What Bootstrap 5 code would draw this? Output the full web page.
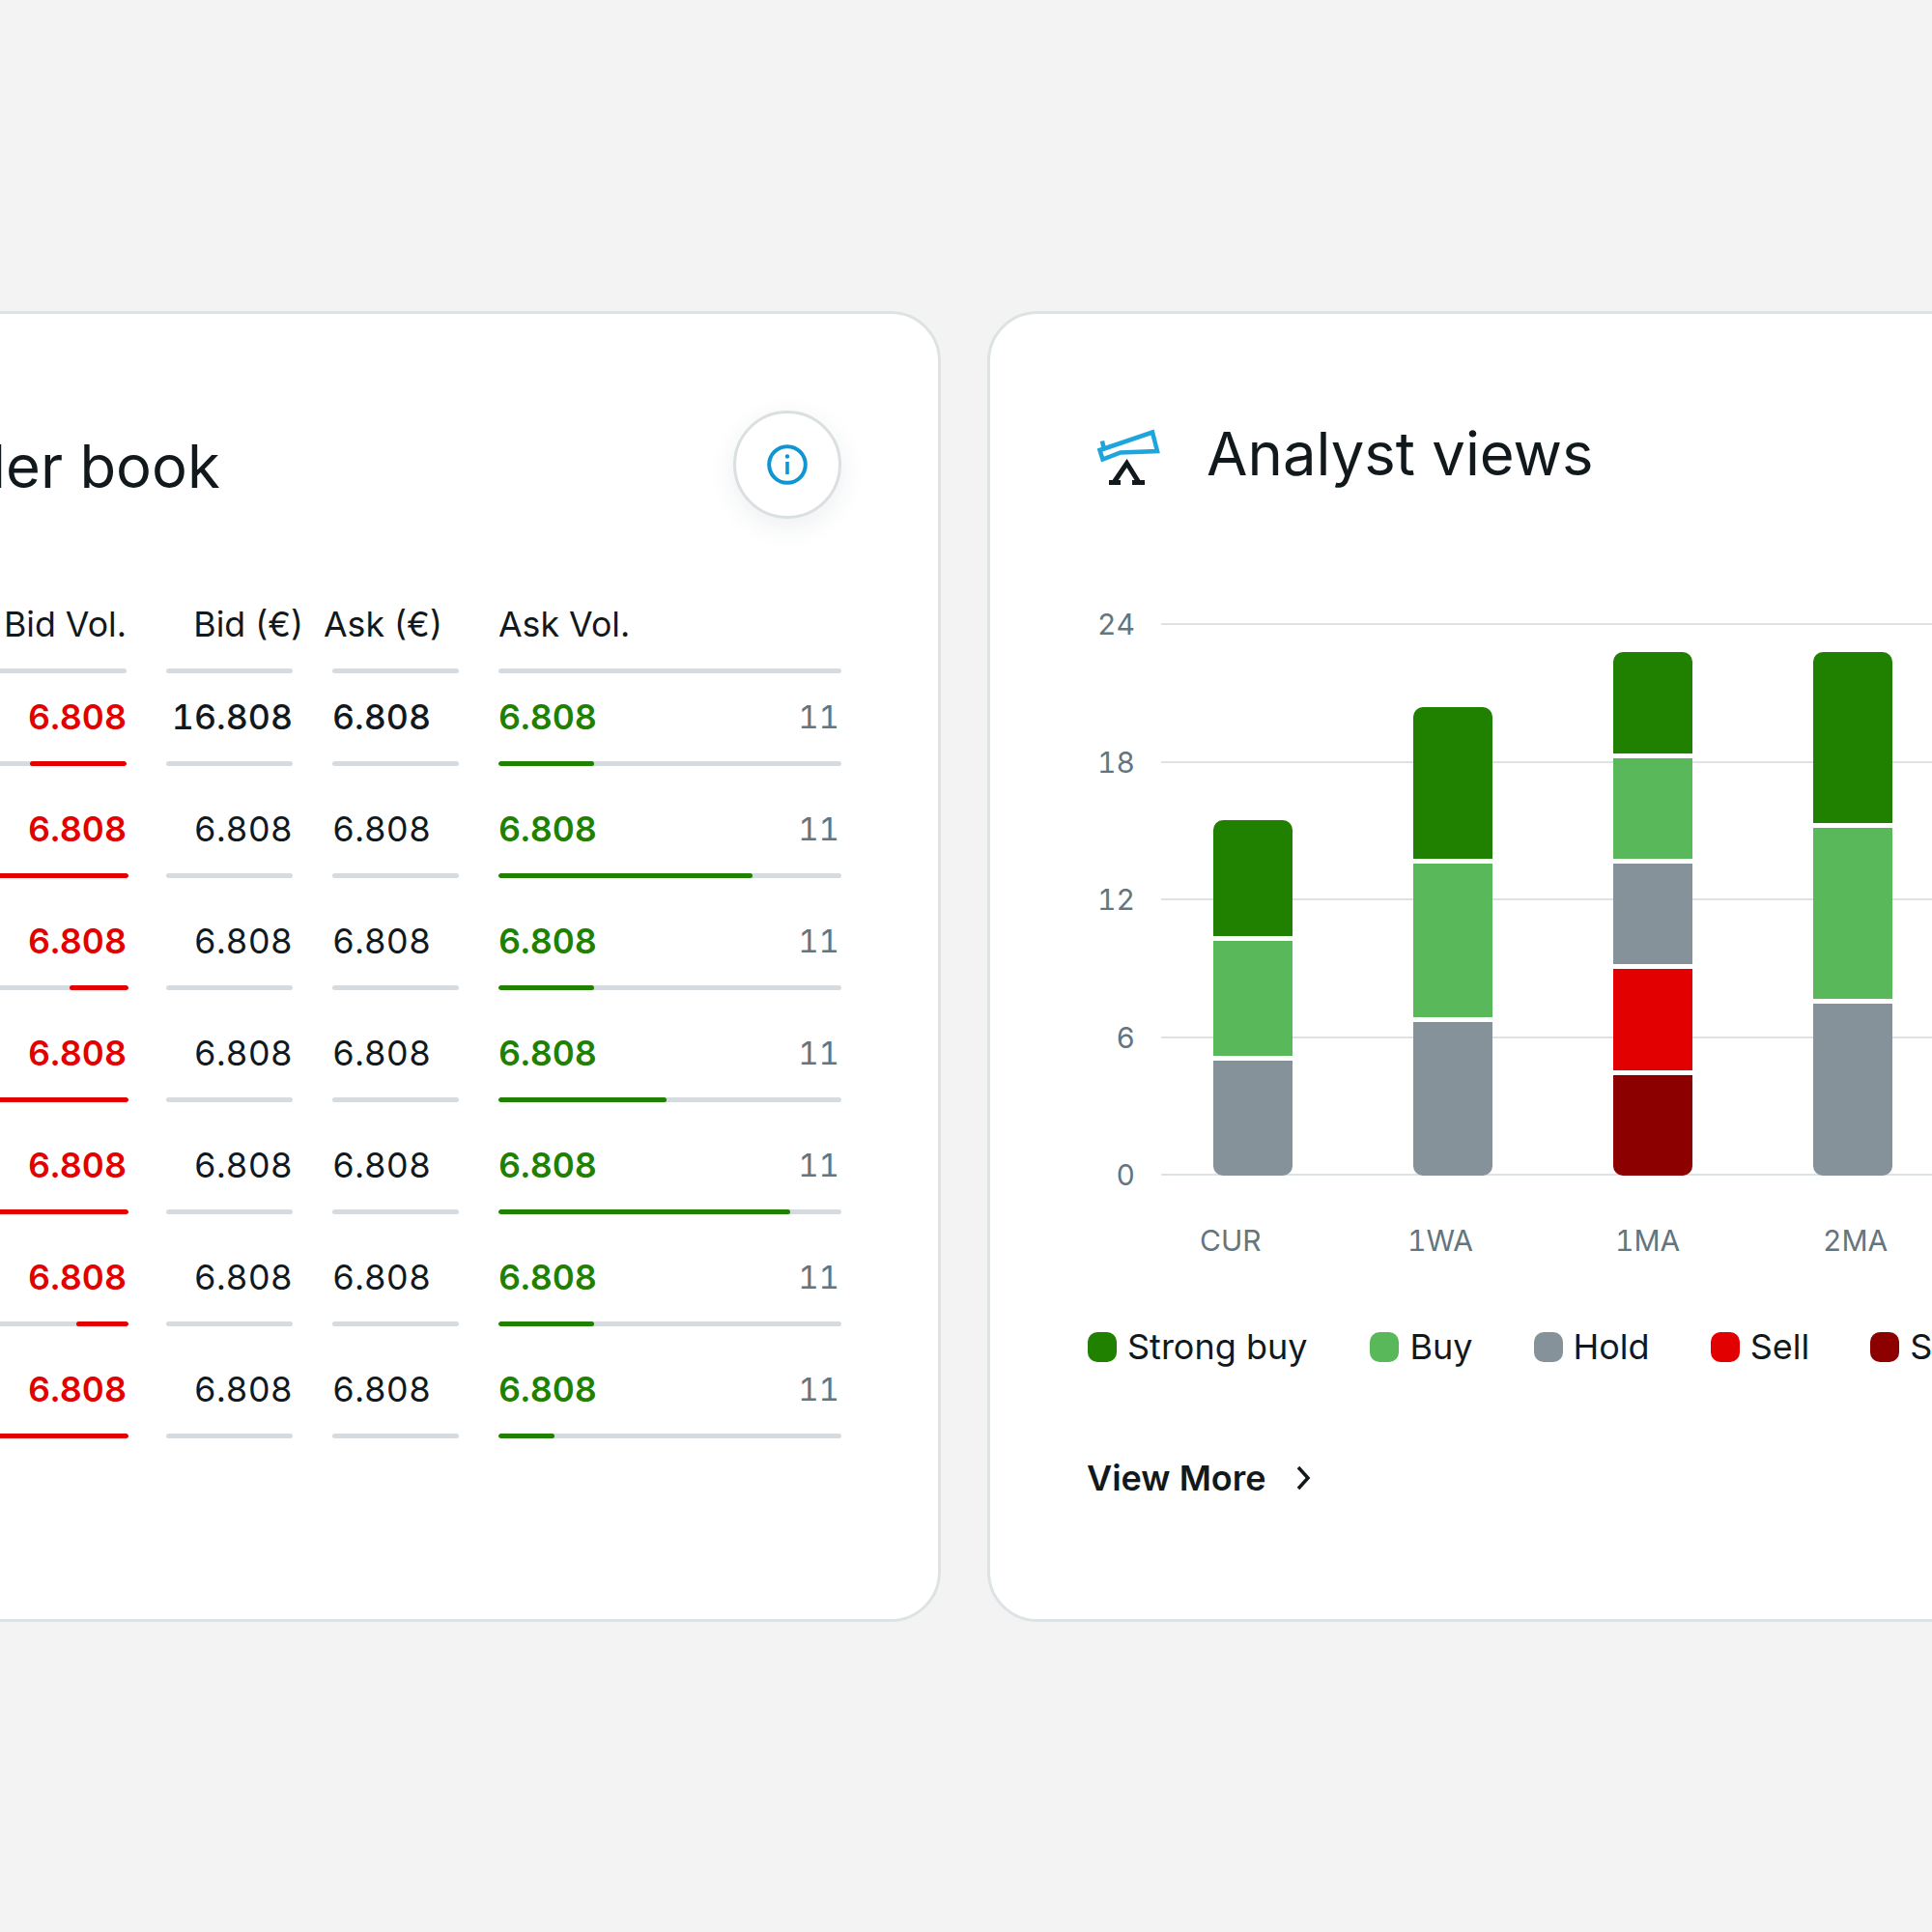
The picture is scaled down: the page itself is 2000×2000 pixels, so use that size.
<!DOCTYPE html>
<html lang="en">
<head>
    <meta charset="UTF-8">
    <meta name="viewport" content="width=device-width, initial-scale=1.0">
    <title>Order book and analyst views</title>
    <link rel="stylesheet" href="https://cdn.jsdelivr.net/npm/bootstrap@5.3.0/dist/css/bootstrap.min.css">
    <style>
        body {
            background-color: #f3f3f3;
            color: #12191d;
            font-family: "Inter", "Liberation Sans", sans-serif;
            overflow: hidden;
        }

        .page-wrap {
            margin-left: -328px;
            padding-top: 322px;
            gap: 48px;
        }

        .panel {
            flex: 0 0 1302px;
            height: 1357px;
            padding: 100px 100px;
            border: 3px solid #dde2e4;
            border-radius: 52px;
            background: #fff;
        }

        .panel-title {
            font-size: 61.6px;
            font-weight: 400;
            line-height: 72px;
            margin: 0;
        }

        .info-btn {
            width: 112px;
            height: 112px;
            border: 3px solid #dae0e2;
            border-radius: 50%;
            background: #fff;
            box-shadow: 0 8px 28px rgba(30, 50, 60, .08);
        }

        /* order book */
        .book-head { height: 112px; }
        .book-title { margin-left: 124px; margin-top: 3px; }

        .book-grid {
            display: grid;
            grid-template-columns: 356px 131px 131px 355px;
            column-gap: 41px;
            font-size: 35.7px;
            line-height: 44px;
        }

        .book-grid.head-row { margin-top: 87px; margin-bottom: 23px; }
        .book-grid.data-row { margin-bottom: 43px; font-variant-numeric: tabular-nums; }

        .cell-text { margin-bottom: 24px; white-space: nowrap; }
        .shift-right { margin-right: -11px; }
        .shift-left { margin-left: -9px; }
        .count-text { color: #64757e; font-size: 33px; padding-right: 2px; }
        .bid-text { color: #e30000; }
        .ask-text { color: #208000; }

        .level-bar {
            --bs-progress-height: 5px;
            --bs-progress-bg: #d6dbdf;
            --bs-progress-border-radius: 3px;
        }

        .level-bar.bid-wide { margin-right: -2px; }
        .level-bar .progress-bar { border-radius: 3px; }
        .fill-bid { background-color: #e30000; }
        .fill-ask { background-color: #208000; }

        /* analyst chart */
        .views-head { height: 90px; }
        .views-icon { margin-left: 8px; margin-right: 46px; margin-top: 8px; }

        .chart-area {
            position: relative;
            height: 572px;
            margin-top: 130px;
        }

        .axis-row { height: 2px; }

        .axis-label {
            width: 50px;
            margin-right: 27px;
            color: #64757e;
            font-size: 30px;
            font-variant-numeric: tabular-nums;
            line-height: 2px;
            text-align: right;
        }

        .axis-line { height: 2px; background: #dde2e4; }

        .bar-layer {
            position: absolute;
            left: 131px;
            bottom: 0;
            gap: 125px;
        }

        .stack-bar {
            width: 82px;
            border-radius: 10px;
            overflow: hidden;
        }

        .stack-bar > div + div { border-top: 5px solid #fff; }

        .c-strong { background-color: #208000; }
        .c-buy { background-color: #59b85a; }
        .c-hold { background-color: #869299; }
        .c-sell { background-color: #e30000; }
        .c-strong-sell { background-color: #8c0000; }

        .tick-row {
            margin-top: 47px;
            margin-left: 117px;
            color: #64757e;
            font-size: 30px;
            font-variant-numeric: tabular-nums;
            line-height: 40px;
        }

        .tick-cell { width: 215px; }

        .legend-row {
            margin-top: 68px;
            margin-left: 1px;
            font-size: 36px;
            line-height: 44px;
            white-space: nowrap;
            gap: 63px;
        }

        .legend-first { margin-right: 2px; }

        .legend-box {
            width: 30px;
            height: 31px;
            margin-right: 11px;
            border-radius: 10px;
        }

        .more-link {
            margin-top: 92px;
            color: #12191d;
            font-size: 36px;
            font-weight: 600;
            line-height: 44px;
            text-decoration: none;
            gap: 30px;
        }
    </style>
</head>
<body>

    <div class="page-wrap d-flex">

        <!-- Order book -->
        <div class="panel">
            <div class="book-head d-flex align-items-center justify-content-between">
                <h2 class="panel-title book-title">Order book</h2>
                <div class="info-btn d-flex align-items-center justify-content-center">
                    <svg width="42" height="42" viewBox="0 0 42 42" fill="none" stroke="#0f96d2" stroke-width="4">
                        <circle cx="21" cy="21" r="18.8"/>
                        <path d="M21 18v13" stroke-width="3.6"/>
                        <circle cx="21" cy="12.5" r="2.2" fill="#0f96d2" stroke="none"/>
                    </svg>
                </div>
            </div>

            <div class="book-grid head-row">
                <div><div class="cell-text text-end">Bid Vol.</div><div class="progress level-bar"></div></div>
                <div><div class="cell-text text-end shift-right">Bid (€)</div><div class="progress level-bar"></div></div>
                <div><div class="cell-text shift-left">Ask (€)</div><div class="progress level-bar"></div></div>
                <div><div class="cell-text">Ask Vol.</div><div class="progress level-bar"></div></div>
            </div>

            <div class="book-grid data-row">
                <div><div class="cell-text text-end bid-text fw-semibold">6.808</div><div class="progress level-bar justify-content-end"><div class="progress-bar fill-bid" style="width: 28%"></div></div></div>
                <div><div class="cell-text text-end fw-medium">16.808</div><div class="progress level-bar"></div></div>
                <div><div class="cell-text fw-medium">6.808</div><div class="progress level-bar"></div></div>
                <div><div class="cell-text d-flex justify-content-between"><span class="ask-text fw-semibold">6.808</span><span class="count-text">11</span></div><div class="progress level-bar"><div class="progress-bar fill-ask" style="width: 28%"></div></div></div>
            </div>
            <div class="book-grid data-row">
                <div><div class="cell-text text-end bid-text fw-semibold">6.808</div><div class="progress level-bar bid-wide justify-content-end"><div class="progress-bar fill-bid" style="width: 74%"></div></div></div>
                <div><div class="cell-text text-end">6.808</div><div class="progress level-bar"></div></div>
                <div><div class="cell-text">6.808</div><div class="progress level-bar"></div></div>
                <div><div class="cell-text d-flex justify-content-between"><span class="ask-text fw-semibold">6.808</span><span class="count-text">11</span></div><div class="progress level-bar"><div class="progress-bar fill-ask" style="width: 74%"></div></div></div>
            </div>
            <div class="book-grid data-row">
                <div><div class="cell-text text-end bid-text fw-semibold">6.808</div><div class="progress level-bar bid-wide justify-content-end"><div class="progress-bar fill-bid" style="width: 17%"></div></div></div>
                <div><div class="cell-text text-end">6.808</div><div class="progress level-bar"></div></div>
                <div><div class="cell-text">6.808</div><div class="progress level-bar"></div></div>
                <div><div class="cell-text d-flex justify-content-between"><span class="ask-text fw-semibold">6.808</span><span class="count-text">11</span></div><div class="progress level-bar"><div class="progress-bar fill-ask" style="width: 28%"></div></div></div>
            </div>
            <div class="book-grid data-row">
                <div><div class="cell-text text-end bid-text fw-semibold">6.808</div><div class="progress level-bar bid-wide justify-content-end"><div class="progress-bar fill-bid" style="width: 60%"></div></div></div>
                <div><div class="cell-text text-end">6.808</div><div class="progress level-bar"></div></div>
                <div><div class="cell-text">6.808</div><div class="progress level-bar"></div></div>
                <div><div class="cell-text d-flex justify-content-between"><span class="ask-text fw-semibold">6.808</span><span class="count-text">11</span></div><div class="progress level-bar"><div class="progress-bar fill-ask" style="width: 49%"></div></div></div>
            </div>
            <div class="book-grid data-row">
                <div><div class="cell-text text-end bid-text fw-semibold">6.808</div><div class="progress level-bar bid-wide justify-content-end"><div class="progress-bar fill-bid" style="width: 85%"></div></div></div>
                <div><div class="cell-text text-end">6.808</div><div class="progress level-bar"></div></div>
                <div><div class="cell-text">6.808</div><div class="progress level-bar"></div></div>
                <div><div class="cell-text d-flex justify-content-between"><span class="ask-text fw-semibold">6.808</span><span class="count-text">11</span></div><div class="progress level-bar"><div class="progress-bar fill-ask" style="width: 85%"></div></div></div>
            </div>
            <div class="book-grid data-row">
                <div><div class="cell-text text-end bid-text fw-semibold">6.808</div><div class="progress level-bar bid-wide justify-content-end"><div class="progress-bar fill-bid" style="width: 15%"></div></div></div>
                <div><div class="cell-text text-end">6.808</div><div class="progress level-bar"></div></div>
                <div><div class="cell-text">6.808</div><div class="progress level-bar"></div></div>
                <div><div class="cell-text d-flex justify-content-between"><span class="ask-text fw-semibold">6.808</span><span class="count-text">11</span></div><div class="progress level-bar"><div class="progress-bar fill-ask" style="width: 28%"></div></div></div>
            </div>
            <div class="book-grid data-row">
                <div><div class="cell-text text-end bid-text fw-semibold">6.808</div><div class="progress level-bar bid-wide justify-content-end"><div class="progress-bar fill-bid" style="width: 70%"></div></div></div>
                <div><div class="cell-text text-end">6.808</div><div class="progress level-bar"></div></div>
                <div><div class="cell-text">6.808</div><div class="progress level-bar"></div></div>
                <div><div class="cell-text d-flex justify-content-between"><span class="ask-text fw-semibold">6.808</span><span class="count-text">11</span></div><div class="progress level-bar"><div class="progress-bar fill-ask" style="width: 16.3%"></div></div></div>
            </div>
        </div>

        <!-- Analyst views -->
        <div class="panel">
            <div class="views-head d-flex align-items-center">
                <svg class="views-icon" width="70" height="64" viewBox="23 22 70 64" fill="none">
                    <path d="M31 36.500l1.500 7M28.500 46L83 27.500l5 19.500-38 1.500-18.500 7z" stroke="#1ea5dc" stroke-width="4.500"/>
                    <path d="M43 79.500L56.500 59.500 69 79.500" stroke="#12191d" stroke-width="5"/>
                    <path d="M38 79.500h12M62 79.500h13" stroke="#12191d" stroke-width="5"/>
                </svg>
                <h2 class="panel-title">Analyst views</h2>
            </div>

            <div class="chart-area d-flex flex-column justify-content-between">
                <div class="axis-row d-flex align-items-center"><span class="axis-label">24</span><div class="axis-line flex-grow-1"></div></div>
                <div class="axis-row d-flex align-items-center"><span class="axis-label">18</span><div class="axis-line flex-grow-1"></div></div>
                <div class="axis-row d-flex align-items-center"><span class="axis-label">12</span><div class="axis-line flex-grow-1"></div></div>
                <div class="axis-row d-flex align-items-center"><span class="axis-label">6</span><div class="axis-line flex-grow-1"></div></div>
                <div class="axis-row d-flex align-items-center"><span class="axis-label">0</span><div class="axis-line flex-grow-1"></div></div>

                <div class="bar-layer d-flex align-items-end">
                    <div class="stack-bar">
                        <div class="c-strong" style="height: 120px"></div>
                        <div class="c-buy" style="height: 124px"></div>
                        <div class="c-hold" style="height: 124px"></div>
                    </div>
                    <div class="stack-bar">
                        <div class="c-strong" style="height: 157px"></div>
                        <div class="c-buy" style="height: 164px"></div>
                        <div class="c-hold" style="height: 164px"></div>
                    </div>
                    <div class="stack-bar">
                        <div class="c-strong" style="height: 105px"></div>
                        <div class="c-buy" style="height: 109px"></div>
                        <div class="c-hold" style="height: 109px"></div>
                        <div class="c-sell" style="height: 110px"></div>
                        <div class="c-strong-sell" style="height: 109px"></div>
                    </div>
                    <div class="stack-bar">
                        <div class="c-strong" style="height: 177px"></div>
                        <div class="c-buy" style="height: 182px"></div>
                        <div class="c-hold" style="height: 183px"></div>
                    </div>
                </div>
            </div>

            <div class="tick-row d-flex">
                <span class="tick-cell">CUR</span><span class="tick-cell">1WA</span><span class="tick-cell">1MA</span><span class="tick-cell">2MA</span>
            </div>

            <div class="legend-row d-flex">
                <div class="legend-first d-flex align-items-center"><span class="legend-box c-strong"></span>Strong buy</div>
                <div class="d-flex align-items-center"><span class="legend-box c-buy"></span>Buy</div>
                <div class="d-flex align-items-center"><span class="legend-box c-hold"></span>Hold</div>
                <div class="d-flex align-items-center"><span class="legend-box c-sell"></span>Sell</div>
                <div class="d-flex align-items-center"><span class="legend-box c-strong-sell"></span>Strong sell</div>
            </div>

            <a class="more-link d-inline-flex align-items-center" href="#">
                View More
                <svg width="18" height="26" viewBox="0 0 18 26" fill="none" stroke="#12191d" stroke-width="3.500">
                    <path d="M3 2l10 11-10 11"/>
                </svg>
            </a>
        </div>
    </div>

    <script src="https://cdn.jsdelivr.net/npm/bootstrap@5.3.0/dist/js/bootstrap.bundle.min.js"></script>
</body>
</html>
